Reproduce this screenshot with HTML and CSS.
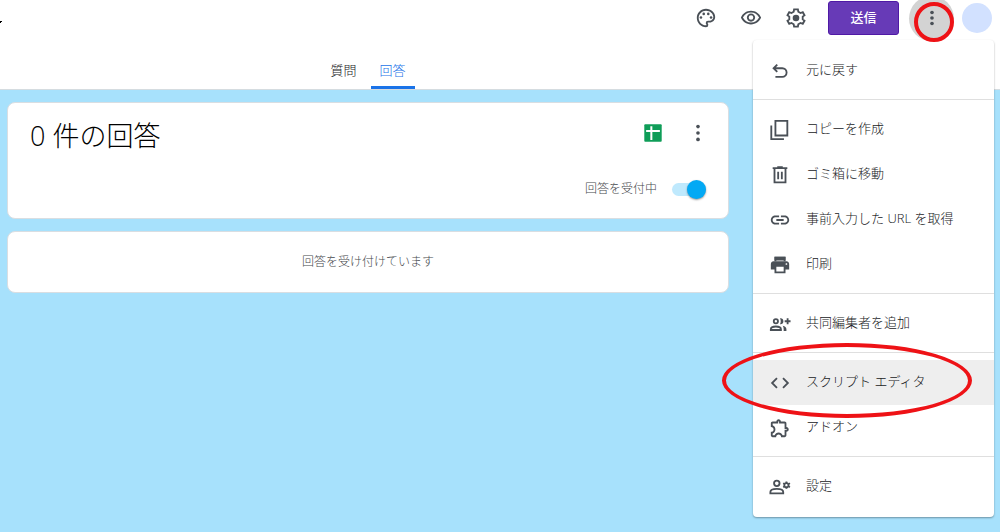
FILE: index.html
```html
<!DOCTYPE html>
<html lang="ja">
<head>
<meta charset="utf-8">
<meta name="viewport" content="width=device-width, initial-scale=1">
<title>回答</title>
<link rel="stylesheet" href="styles.css">
</head>
<body>
<header class="header">
  <div class="toolbar">
    <svg class="title-tail" viewBox="0 0 2 4" aria-hidden="true"><path d="M0 1h2v1H1v1H0z"/></svg>
    <div class="actions">
      <button class="icon-button" type="button" aria-label="テーマをカスタマイズ">
        <svg class="icon" viewBox="0 0 24 24"><path d="M12 22C6.490 22 2 17.510 2 12S6.490 2 12 2s10 4.040 10 9c0 3.310-2.690 6-6 6h-1.770c-.28 0-.5.220-.5.500 0 .12.050.230.130.330.410.470.640 1.060.640 1.670A2.500 2.500 0 0 1 12 22zm0-18c-4.410 0-8 3.590-8 8s3.590 8 8 8c.28 0 .5-.22.500-.5a.54.540 0 0 0-.14-.35c-.41-.46-.63-1.050-.63-1.650a2.500 2.500 0 0 1 2.500-2.500H16c2.210 0 4-1.790 4-4 0-3.860-3.590-7-8-7z"/><circle cx="6.5" cy="11.5" r="1.4"/><circle cx="9.5" cy="7.5" r="1.4"/><circle cx="14.5" cy="7.5" r="1.4"/><circle cx="17.5" cy="11.5" r="1.4"/></svg>
      </button>
      <button class="icon-button" type="button" aria-label="プレビュー">
        <svg class="icon" viewBox="0 0 24 24"><path d="M12 6c3.79 0 7.17 2.13 8.82 5.5C19.17 14.87 15.79 17 12 17s-7.17-2.13-8.82-5.5C4.83 8.13 8.21 6 12 6m0-2C7 4 2.73 7.11 1 11.5 2.73 15.89 7 19 12 19s9.27-3.11 11-7.5C21.27 7.11 17 4 12 4zm0 5a2.5 2.5 0 0 1 0 5 2.5 2.5 0 0 1 0-5m0-2c-2.48 0-4.5 2.02-4.5 4.5S9.52 16 12 16s4.5-2.02 4.5-4.5S14.48 7 12 7z"/></svg>
      </button>
      <button class="icon-button" type="button" aria-label="設定を開く">
        <svg class="icon" viewBox="0 0 24 24"><path class="line" d="m19.300 13.500 2 1.500-1.900 3.300-2.400-.9-2.500 1.500-.4 2.500h-4.200l-.4-2.500L7 17.400l-2.400.9L2.700 15l2-1.500v-3l-2-1.500 1.900-3.300 2.400.9 2.500-1.500.4-2.500h4.200l.4 2.500L17 6.600l2.400-.9L21.300 9l-2 1.500z"/><circle cx="12" cy="12" r="3.600"/></svg>
      </button>
      <button class="send" type="button">送信</button>
      <button class="more" type="button" aria-label="その他" aria-expanded="true">
        <svg class="icon" viewBox="0 0 24 24"><circle cx="12" cy="6" r="2"/><circle cx="12" cy="12" r="2"/><circle cx="12" cy="18" r="2"/></svg>
        <span class="ring ring-more"></span>
      </button>
      <span class="avatar"></span>
    </div>
  </div>
  <nav class="tabs">
    <a class="tab" href="#questions">質問</a>
    <a class="tab tab-active" href="#responses" aria-current="page">回答</a>
  </nav>
</header>

<main class="content">
  <section class="card summary">
    <div class="summary-head">
      <h1 class="heading">0 件の回答</h1>
      <div class="summary-actions">
        <button class="icon-button" type="button" aria-label="スプレッドシートを作成">
          <svg class="icon" viewBox="0 0 24 24"><rect x="2.500" y="2.500" width="19" height="19" rx="1" fill="#0f9d58"/><path d="M4.500 9.800h15M10.200 4.500v15" stroke="#fff" stroke-width="2.200"/></svg>
        </button>
        <button class="icon-button" type="button" aria-label="回答のその他オプション">
          <svg class="icon" viewBox="0 0 24 24"><circle cx="12" cy="5" r="2"/><circle cx="12" cy="12" r="2"/><circle cx="12" cy="19" r="2"/></svg>
        </button>
      </div>
    </div>
    <label class="accepting">回答を受付中<input class="switch" type="checkbox" role="switch" checked></label>
  </section>
  <section class="card waiting">回答を受け付けています</section>
</main>

<div class="menu" role="menu">
  <div class="menu-group">
    <button class="menu-item" type="button" role="menuitem"><svg class="icon" viewBox="0 0 24 24"><path class="line" d="M9 5 5 9l4 4M5 9h9.500a4.700 4.700 0 0 1 0 9.400H7"/></svg>元に戻す</button>
  </div>
  <div class="menu-group">
    <button class="menu-item" type="button" role="menuitem"><svg class="icon" viewBox="0 0 24 24"><path class="line" d="M7 2h13v16H7zM2.500 7v15h13.800"/></svg>コピーを作成</button>
    <button class="menu-item" type="button" role="menuitem"><svg class="icon" viewBox="0 0 24 24"><path class="line" d="M4 4.500h16M9 3.500h6M6 5v15h12V5M10 8.500v8M14 8.500v8"/></svg>ゴミ箱に移動</button>
    <button class="menu-item" type="button" role="menuitem"><svg class="icon" viewBox="0 0 24 24"><path d="M3.900 12c0-1.710 1.390-3.100 3.100-3.100h4V7H7c-2.760 0-5 2.240-5 5s2.240 5 5 5h4v-1.900H7c-1.710 0-3.100-1.390-3.100-3.100zM8 13h8v-2H8v2zm9-6h-4v1.900h4c1.710 0 3.100 1.390 3.100 3.100s-1.390 3.100-3.100 3.100h-4V17h4c2.760 0 5-2.240 5-5s-2.240-5-5-5z"/></svg>事前入力した URL を取得</button>
    <button class="menu-item" type="button" role="menuitem"><svg class="icon" viewBox="0 0 24 24"><path d="M19 8H5c-1.660 0-3 1.340-3 3v6h4v4h12v-4h4v-6c0-1.660-1.340-3-3-3zm-3 11H8v-5h8v5zm3-7c-.55 0-1-.45-1-1s.45-1 1-1 1 .45 1 1-.45 1-1 1zM18 3H6v4h12V3z"/><path class="line" d="M7 8V4h10v4" fill="#fff"/></svg>印刷</button>
  </div>
  <div class="menu-group">
    <button class="menu-item" type="button" role="menuitem"><svg class="icon" viewBox="0 0 24 24"><circle class="line" cx="7.500" cy="9" r="2.300"/><path class="line" d="M2 18.500v-.8c0-2 2.800-3 5.500-3s5.500 1 5.500 3v.8z"/><path d="M12 5.700c2.300-.3 3.700 1.200 3.700 3.300s-1.400 3.600-3.700 3.300c1.100-2 1.100-4.600 0-6.600zM15 14c2.500.5 4 1.900 4 3.700v1.800h-3v-1.800c0-1.500-.3-2.700-1-3.700z"/><path class="line" d="M20.300 5.800v6.400M17.100 9h6.400"/></svg>共同編集者を追加</button>
  </div>
  <div class="menu-group">
    <button class="menu-item menu-item-active" type="button" role="menuitem"><svg class="icon" viewBox="0 0 24 24"><path class="line" d="m8.700 6.700-5.300 5.300 5.300 5.300M15.300 6.700l5.300 5.300-5.300 5.300"/></svg>スクリプト エディタ<span class="ring ring-editor"></span></button>
    <button class="menu-item" type="button" role="menuitem"><svg class="icon" viewBox="0 0 24 24"><path d="M10.500 4.500c.28 0 .5.220.5.500v2h6v6h2c.28 0 .5.220.5.500s-.22.500-.5.500h-2v6h-2.120c-.68-1.750-2.390-3-4.380-3s-3.700 1.250-4.380 3H4v-2.120c1.750-.68 3-2.390 3-4.380 0-1.990-1.240-3.700-2.990-4.380L4 7h6V5c0-.28.220-.5.500-.5m0-2C9.120 2.500 8 3.620 8 5H4c-1.100 0-1.990.9-1.990 2v3.800h.29c1.490 0 2.700 1.210 2.700 2.700s-1.210 2.700-2.700 2.700H2V20c0 1.100.9 2 2 2h3.800v-.3c0-1.490 1.210-2.700 2.700-2.700s2.700 1.210 2.700 2.700v.3H17c1.100 0 2-.9 2-2v-4c1.380 0 2.500-1.120 2.500-2.500S20.380 11 19 11V7c0-1.100-.9-2-2-2h-4c0-1.380-1.120-2.500-2.500-2.500z"/></svg>アドオン</button>
  </div>
  <div class="menu-group">
    <button class="menu-item" type="button" role="menuitem"><svg class="icon" viewBox="0 0 24 24"><circle class="line" cx="8.500" cy="8" r="3"/><path class="line" d="M1.500 19v-1.500c0-2.300 3.500-3.500 7-3.500s7 1.200 7 3.500V19z"/><circle class="line" cx="19" cy="10" r="2.300"/><path d="M18 6h2v2h-2zM18 12h2v2h-2zM15 8.500l1-1.500 1.500 1-1 1.500zM21.500 12l1 1 .8-1.500-1.300-1zM15 11.500l1 1.500 1.500-1-1-1.500zM21.500 8l1-1 .8 1.500-1.300 1z"/></svg>設定</button>
  </div>
</div>
</body>
</html>
```
FILE: styles.css
```css
* {
  box-sizing: border-box;
}

body {
  --side: 271px;
  position: relative;
  margin: 0;
  min-height: 100vh;
  background: #a7e1fc;
  color: #202124;
  font-family: "Open Sans", "Noto Sans CJK JP", sans-serif;
  font-size: 13px;
  font-weight: 300;
  line-height: 20px;
}

button {
  padding: 0;
  border: 0;
  background: none;
  color: inherit;
  font: inherit;
}

.icon {
  display: block;
  flex: none;
  width: 22px;
  height: 22px;
  fill: #4a5057;
}

.line {
  fill: none;
  stroke: #4a5057;
  stroke-width: 2;
}

.header {
  background: #fff;
  border-bottom: 1px solid #d5dce0;
}

.toolbar {
  display: flex;
  align-items: center;
  justify-content: space-between;
  height: 36px;
  padding-right: 8px;
}

.title-tail {
  align-self: flex-end;
  width: 2px;
  height: 4px;
  margin-bottom: 12px;
}

.actions,
.summary-actions {
  display: flex;
  align-items: center;
}

.icon-button {
  display: grid;
  place-items: center;
  width: 45px;
  height: 36px;
}

.send {
  width: 71px;
  height: 34px;
  margin: 0 10px;
  padding-bottom: 2px;
  border: 1px solid #4f19a5;
  border-radius: 3px;
  background: #673ab7;
  color: #fff;
  font-weight: 500;
}

.more {
  position: relative;
  display: grid;
  place-items: center;
  width: 45px;
  height: 45px;
  margin-right: 8px;
  border-radius: 50%;
  background: #d3d3d3;
}

.avatar {
  width: 30px;
  height: 30px;
  border-radius: 50%;
  background: #d2e1ff;
}

.ring {
  position: absolute;
  z-index: 1;
  border: 4px solid #ee1216;
  border-radius: 50%;
  pointer-events: none;
}

.ring-more {
  inset: 6px 0 -1px 5px;
}

.ring-editor {
  inset: -17px 22px -13px -31px;
}

.tabs {
  display: flex;
  justify-content: center;
  gap: 5px;
  margin-right: var(--side);
  padding-left: 7px;
}

.tab {
  display: grid;
  align-content: center;
  height: 53px;
  padding: 18px 9px 0;
  border-bottom: 3px solid transparent;
  color: #202124;
  font-weight: 300;
  text-decoration: none;
}

.tab-active {
  border-color: #1a73e8;
  color: #1a73e8;
}

.content {
  display: grid;
  gap: 12px;
  margin-right: var(--side);
  padding: 12px 0 12px 7px;
}

.card {
  border: 1px solid #d9dee2;
  border-radius: 8px;
  background: #fff;
}

.summary {
  display: grid;
  gap: 22px;
  padding: 12px 8px 19px 22px;
}

.summary-head {
  display: flex;
  align-items: flex-start;
  justify-content: space-between;
}

.heading {
  margin: 0;
  color: #000;
  font-size: 27px;
  font-weight: 300;
  line-height: 42px;
}

.accepting {
  display: flex;
  align-items: center;
  justify-content: flex-end;
  gap: 15px;
  padding-right: 14px;
  color: #45494d;
  font-size: 12px;
}

.switch {
  appearance: none;
  display: flex;
  align-items: center;
  width: 34px;
  height: 13px;
  margin: 0;
  border-radius: 7px;
  background: #bfe9fd;
}

.switch::before {
  content: "";
  flex: none;
  width: 19px;
  height: 19px;
  border-radius: 50%;
  background: #9aa0a6;
  box-shadow: 0 1px 2px rgba(0, 0, 0, 0.4);
}

.switch:checked::before {
  margin-left: auto;
  background: #03a9f4;
}

.waiting {
  padding: 20px;
  color: #45494d;
  font-size: 12px;
  text-align: center;
}

.menu {
  position: absolute;
  top: 40px;
  right: 6px;
  width: 241px;
  padding: 1px 0 2px;
  border-radius: 4px;
  background: #fff;
  box-shadow: 0 1px 2px rgba(0, 0, 0, 0.35);
}

.menu-group {
  padding: 7px 0 6px;
  border-bottom: 1px solid #dfdfdf;
}

.menu-group:last-child {
  border-bottom: 0;
}

.menu-item {
  position: relative;
  display: flex;
  align-items: center;
  gap: 15px;
  width: 100%;
  height: 45px;
  padding: 0 16px 4px;
  white-space: nowrap;
}

.menu-item .icon {
  margin-top: 4px;
}

.menu-item-active {
  background: #eee;
}
```
